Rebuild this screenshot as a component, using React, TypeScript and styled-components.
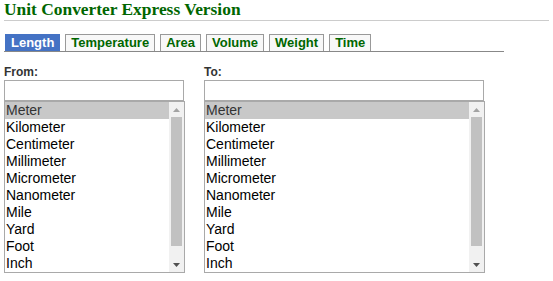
import React, { useState } from 'react';
import styled, { createGlobalStyle } from 'styled-components';

const GlobalStyle = createGlobalStyle`
  body {
    margin: 0;
    padding: 0 4px;
    background: #ffffff;
    font-family: 'Liberation Sans', Arial, sans-serif;
  }
`;

const Page = styled.div`
  width: 545px;
`;

const Title = styled.h1`
  margin: 0;
  padding: 0 0 1px 0;
  height: 19px;
  font-family: 'Liberation Serif', 'Times New Roman', serif;
  font-size: 17.4px;
  line-height: 19px;
  font-weight: bold;
  color: #006600;
  border-bottom: 1px solid #cccccc;
`;

const TabBar = styled.div`
  display: flex;
  gap: 5px;
  width: 499px;
  margin-top: 13px;
  padding-left: 1px;
  border-bottom: 1px solid #888888;
`;

const Tab = styled.button<{ active?: boolean }>`
  height: 17px;
  padding: 0 5px;
  border: 1px solid ${(p) => (p.active ? '#4472c4' : '#999999')};
  border-bottom: none;
  background: ${(p) => (p.active ? '#4472c4' : '#f8f8f8')};
  color: ${(p) => (p.active ? '#ffffff' : '#006600')};
  font-family: 'Liberation Sans', Arial, sans-serif;
  font-size: 13px;
  font-weight: bold;
  line-height: 16px;
  cursor: pointer;
`;

const Columns = styled.div`
  display: flex;
  gap: 19px;
  margin-top: 12px;
`;

const Column = styled.div<{ width: number }>`
  display: flex;
  flex-direction: column;
  width: ${(p) => p.width}px;
`;

const Label = styled.label`
  font-size: 12px;
  font-weight: bold;
  line-height: 16px;
  color: #333333;
`;

const ValueInput = styled.input`
  box-sizing: border-box;
  width: calc(100% - 1px);
  height: 21px;
  margin: 0;
  border: 1px solid #a9a9a9;
  padding: 0 2px;
  font-family: 'Liberation Sans', Arial, sans-serif;
  font-size: 14px;
  outline: none;
`;

const ListBox = styled.div`
  box-sizing: border-box;
  display: flex;
  width: 100%;
  height: 172px;
  border: 1px solid #a9a9a9;
  background: #ffffff;
`;

const Options = styled.div`
  flex: 1;
  overflow: hidden;
`;

const Option = styled.div<{ selected?: boolean }>`
  height: 17px;
  padding: 0 1px;
  font-size: 14px;
  line-height: 17px;
  color: ${(p) => (p.selected ? '#333333' : '#000000')};
  background: ${(p) => (p.selected ? '#c8c8c8' : 'transparent')};
  white-space: nowrap;
  cursor: default;
`;

const ScrollBar = styled.div`
  display: flex;
  flex-direction: column;
  width: 15px;
  background: #f1f1f1;
`;

const ScrollButton = styled.div`
  display: flex;
  align-items: center;
  justify-content: center;
  height: 15px;
`;

const Track = styled.div`
  flex: 1;
  padding: 0 2px;
`;

const Thumb = styled.div`
  height: 129px;
  background: #c1c1c1;
`;

const Arrow: React.FC<{ down?: boolean }> = ({ down }) => (
  <svg width="7" height="4" viewBox="0 0 7 4">
    <polygon
      points={down ? '0,0 7,0 3.5,4' : '0,4 7,4 3.5,0'}
      fill={down ? '#505050' : '#a3a3a3'}
    />
  </svg>
);

const tabs = ['Length', 'Temperature', 'Area', 'Volume', 'Weight', 'Time'];

const units = [
  'Meter',
  'Kilometer',
  'Centimeter',
  'Millimeter',
  'Micrometer',
  'Nanometer',
  'Mile',
  'Yard',
  'Foot',
  'Inch',
];

const UnitSelect: React.FC = () => {
  const [value, setValue] = useState('Meter');
  return (
    <ListBox role="listbox">
      <Options>
        {units.map((u) => (
          <Option
            key={u}
            role="option"
            aria-selected={u === value}
            selected={u === value}
            onClick={() => setValue(u)}
          >
            {u}
          </Option>
        ))}
      </Options>
      <ScrollBar>
        <ScrollButton>
          <Arrow />
        </ScrollButton>
        <Track>
          <Thumb />
        </Track>
        <ScrollButton>
          <Arrow down />
        </ScrollButton>
      </ScrollBar>
    </ListBox>
  );
};

const App: React.FC = () => {
  const [active, setActive] = useState('Length');
  return (
    <Page>
      <GlobalStyle />
      <Title>Unit Converter Express Version</Title>
      <TabBar>
        {tabs.map((t) => (
          <Tab key={t} active={t === active} onClick={() => setActive(t)}>
            {t}
          </Tab>
        ))}
      </TabBar>
      <Columns>
        <Column width={181}>
          <Label>From:</Label>
          <ValueInput type="text" />
          <UnitSelect />
        </Column>
        <Column width={281}>
          <Label>To:</Label>
          <ValueInput type="text" />
          <UnitSelect />
        </Column>
      </Columns>
    </Page>
  );
};

export default App;
